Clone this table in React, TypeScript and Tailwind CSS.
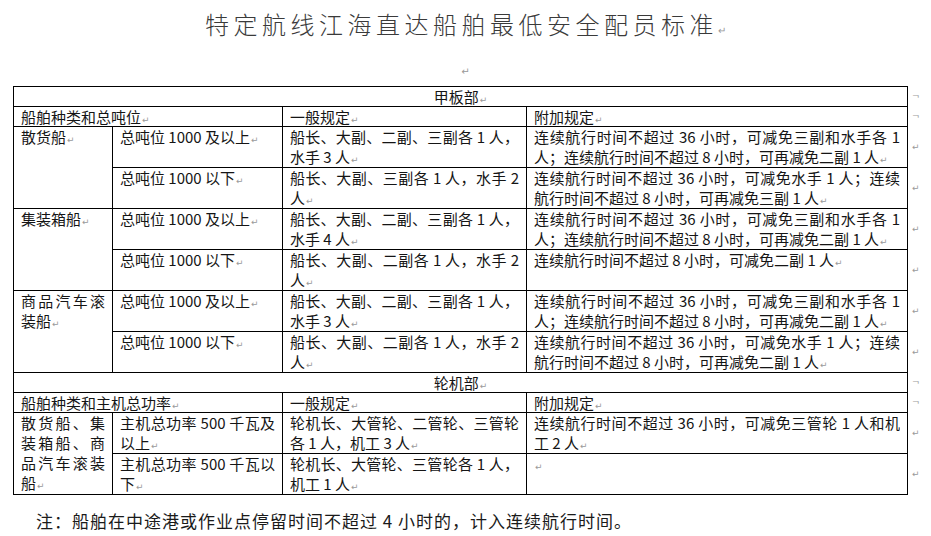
import React from "react";

const Mark = () => (
  <span className="font-['DejaVu_Sans',sans-serif] text-[9px] leading-none text-[#9a9a9a] ml-[1px]">↵</span>
);

function Lines({ lines }: { lines: string[] }) {
  return (
    <>
      {lines.map((l, i) =>
        i < lines.length - 1 ? (
          <div key={i} className="text-justify [text-align-last:justify] leading-[20px] h-[20px] overflow-hidden">
            {l}
          </div>
        ) : (
          <div key={i} className="whitespace-nowrap leading-[20px] h-[20px] overflow-hidden">
            {l}
            <Mark />
          </div>
        )
      )}
    </>
  );
}

const td = "border border-black align-top pl-[7px] pr-[7px] py-0";
const endTd = "border-0 align-middle pl-[4px] py-0 text-[9px] leading-none text-[#9a9a9a] font-['DejaVu_Sans',sans-serif]";

const R1 = ["连续航行时间不超过 36 小时，可减免三副和水手各 1", "人；连续航行时间不超过 8 小时，可再减免二副 1 人"];

type Row = { c1?: { lines: string[]; span: number }; c2: string[]; c3: string[]; c4: string[] };

const deckRows: Row[] = [
  { c1: { lines: ["散货船"], span: 2 }, c2: ["总吨位 1000 及以上"], c3: ["船长、大副、二副、三副各 1 人，", "水手 3 人"], c4: R1 },
  { c2: ["总吨位 1000 以下"], c3: ["船长、大副、三副各 1 人，水手 2", "人"], c4: ["连续航行时间不超过 36 小时，可减免水手 1 人；连续", "航行时间不超过 8 小时，可再减免三副 1 人"] },
  { c1: { lines: ["集装箱船"], span: 2 }, c2: ["总吨位 1000 及以上"], c3: ["船长、大副、二副、三副各 1 人，", "水手 4 人"], c4: R1 },
  { c2: ["总吨位 1000 以下"], c3: ["船长、大副、二副各 1 人，水手 2", "人"], c4: ["连续航行时间不超过 8 小时，可减免二副 1 人"] },
  { c1: { lines: ["商品汽车滚", "装船"], span: 2 }, c2: ["总吨位 1000 及以上"], c3: ["船长、大副、二副、三副各 1 人，", "水手 3 人"], c4: R1 },
  { c2: ["总吨位 1000 以下"], c3: ["船长、大副、二副各 1 人，水手 2", "人"], c4: ["连续航行时间不超过 36 小时，可减免水手 1 人；连续", "航行时间不超过 8 小时，可再减免二副 1 人"] },
];

const engRows: Row[] = [
  {
    c1: { lines: ["散货船、集", "装箱船、商", "品汽车滚装", "船"], span: 2 },
    c2: ["主机总功率 500 千瓦及", "以上"],
    c3: ["轮机长、大管轮、二管轮、三管轮", "各 1 人，机工 3 人"],
    c4: ["连续航行时间不超过 36 小时，可减免三管轮 1 人和机", "工 2 人"],
  },
  { c2: ["主机总功率 500 千瓦以", "下"], c3: ["轮机长、大管轮、三管轮各 1 人，", "机工 1 人"], c4: [""] },
];

function BodyRow({ r }: { r: Row }) {
  return (
    <tr>
      {r.c1 && (
        <td rowSpan={r.c1.span} className={td}>
          <Lines lines={r.c1.lines} />
        </td>
      )}
      <td className={td}>
        <div className="h-[40px]">
          <Lines lines={r.c2} />
        </div>
      </td>
      <td className={td}>
        <Lines lines={r.c3} />
      </td>
      <td className={td}>
        <Lines lines={r.c4} />
      </td>
      <td className={endTd}>↵</td>
    </tr>
  );
}

function One({ text, center }: { text: string; center?: boolean }) {
  return (
    <div className={"h-[19px] leading-[19px] whitespace-nowrap overflow-hidden" + (center ? " text-center" : "")}>
      {text}
      <Mark />
    </div>
  );
}

function SectionHead({ title }: { title: string }) {
  return (
    <tr>
      <td colSpan={4} className={td}>
        <One text={title} center />
      </td>
      <td className={endTd + " align-bottom"}>¬</td>
    </tr>
  );
}

function ColHead({ first }: { first: string }) {
  return (
    <tr>
      <td colSpan={2} className={td}>
        <One text={first} />
      </td>
      <td className={td}>
        <One text="一般规定" />
      </td>
      <td className={td}>
        <One text="附加规定" />
      </td>
      <td className={endTd + " align-bottom"}>¬</td>
    </tr>
  );
}

export default function App() {
  return (
    <div className="w-[931px] h-[536px] bg-white overflow-hidden font-['Noto_Sans_CJK_SC',sans-serif] text-[#151515]">
      <div className="h-[54px] flex items-center justify-center">
        <div className="text-[24px] font-light tracking-[4.5px] text-[#3a3a3a] leading-[30px] whitespace-nowrap">
          特定航线江海直达船舶最低安全配员标准
          <span className="font-['DejaVu_Sans',sans-serif] text-[10px] tracking-normal text-[#999]">↵</span>
        </div>
      </div>
      <div className="mt-[8px] h-[20px] leading-[20px] text-center text-[10px] text-[#999] font-['DejaVu_Sans',sans-serif]">↵</div>
      <div className="mt-[4px] ml-[13px]">
        <table className="border-collapse table-fixed w-[914px] text-[15px]">
          <colgroup>
            <col className="w-[99px]" />
            <col className="w-[170px]" />
            <col className="w-[244px]" />
            <col className="w-[381px]" />
            <col className="w-[20px]" />
          </colgroup>
          <tbody>
            <SectionHead title="甲板部" />
            <ColHead first="船舶种类和总吨位" />
            {deckRows.map((r, i) => (
              <BodyRow key={i} r={r} />
            ))}
            <SectionHead title="轮机部" />
            <ColHead first="船舶种类和主机总功率" />
            {engRows.map((r, i) => (
              <BodyRow key={"e" + i} r={r} />
            ))}
          </tbody>
        </table>
      </div>
      <div className="mt-[14px] ml-[36px] text-[17px] tracking-[1px] leading-[24px] whitespace-nowrap text-[#1a1a1a]">
        注：船舶在中途港或作业点停留时间不超过 4 小时的，计入连续航行时间。
      </div>
    </div>
  );
}
